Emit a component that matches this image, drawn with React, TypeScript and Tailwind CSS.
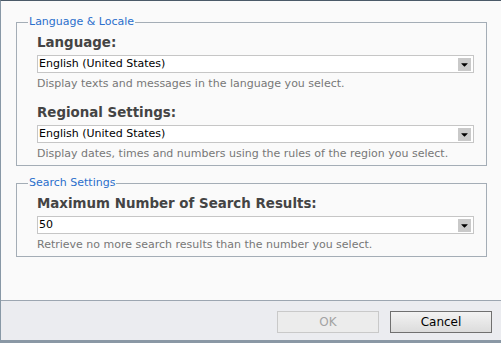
import { FaCaretDown } from "react-icons/fa";

interface Setting {
  label: string;
  value: string;
  help: string;
}

function SelectBox({ value }: { value: string }) {
  return (
    <div className="mt-[4px] h-[18px] w-full border border-[#c6c6c6] bg-white flex items-center justify-between pl-[1px] pr-[2px]">
      <span className="text-[11px] leading-[14px] text-black">{value}</span>
      <span className="w-[13px] h-[13px] bg-[#c9c9c9] flex items-center justify-center">
        <FaCaretDown size={11} className="text-black" />
      </span>
    </div>
  );
}

function Field({ s, first }: { s: Setting; first?: boolean }) {
  return (
    <div className={first ? "mt-[6px]" : "mt-[14px]"}>
      <div className="text-[13.4px] leading-[16px] font-bold text-[#444]">{s.label}</div>
      <SelectBox value={s.value} />
      <div className="mt-[4px] text-[11px] leading-[14px] text-[#777]">{s.help}</div>
    </div>
  );
}

function Group({ title, items, className }: { title: string; items: Setting[]; className?: string }) {
  return (
    <fieldset className={`border border-[#a4adb6] pl-[11px] pr-[12px] pb-[4px] ${className ?? ""}`}>
      <legend className="px-[1px] text-[11px] leading-[14px] text-[#2a6fcc]">{title}</legend>
      <div className="pl-[9px]">
        {items.map((s, i) => (
          <Field key={s.label} s={s} first={i === 0} />
        ))}
      </div>
    </fieldset>
  );
}

const locale: Setting[] = [
  {
    label: "Language:",
    value: "English (United States)",
    help: "Display texts and messages in the language you select.",
  },
  {
    label: "Regional Settings:",
    value: "English (United States)",
    help: "Display dates, times and numbers using the rules of the region you select.",
  },
];

const search: Setting[] = [
  {
    label: "Maximum Number of Search Results:",
    value: "50",
    help: "Retrieve no more search results than the number you select.",
  },
];

export default function App() {
  return (
    <div
      className="w-[501px] h-[343px] flex flex-col bg-[#fafafa] border-l border-l-[#8898a6] border-t border-t-[#4b5a68] border-b-[3px] border-b-[#8a98a5] overflow-hidden"
      style={{ fontFamily: "Tahoma, 'DejaVu Sans', 'Noto Sans', sans-serif" }}
    >
      {/* Settings */}
      <main className="flex-1 pl-[15px] pr-[14px] pt-[14px]">
        <Group title="Language & Locale" items={locale} />
        <Group title="Search Settings" items={search} className="mt-[10px]" />
      </main>

      {/* Footer */}
      <footer className="h-[40px] border-t border-[#9ca6b1] bg-[#ebecf0] flex items-start justify-end gap-[11px] pt-[10px] pr-[9px]">
        <button
          disabled
          className="w-[102px] h-[22px] border border-[#c9c9c9] bg-[#ececec] text-[12px] text-[#a3a3a3]"
        >
          OK
        </button>
        <button className="w-[102px] h-[22px] border border-[#707070] bg-gradient-to-b from-[#f3f3f3] to-[#dcdcdc] text-[12px] text-black">
          Cancel
        </button>
      </footer>
    </div>
  );
}
